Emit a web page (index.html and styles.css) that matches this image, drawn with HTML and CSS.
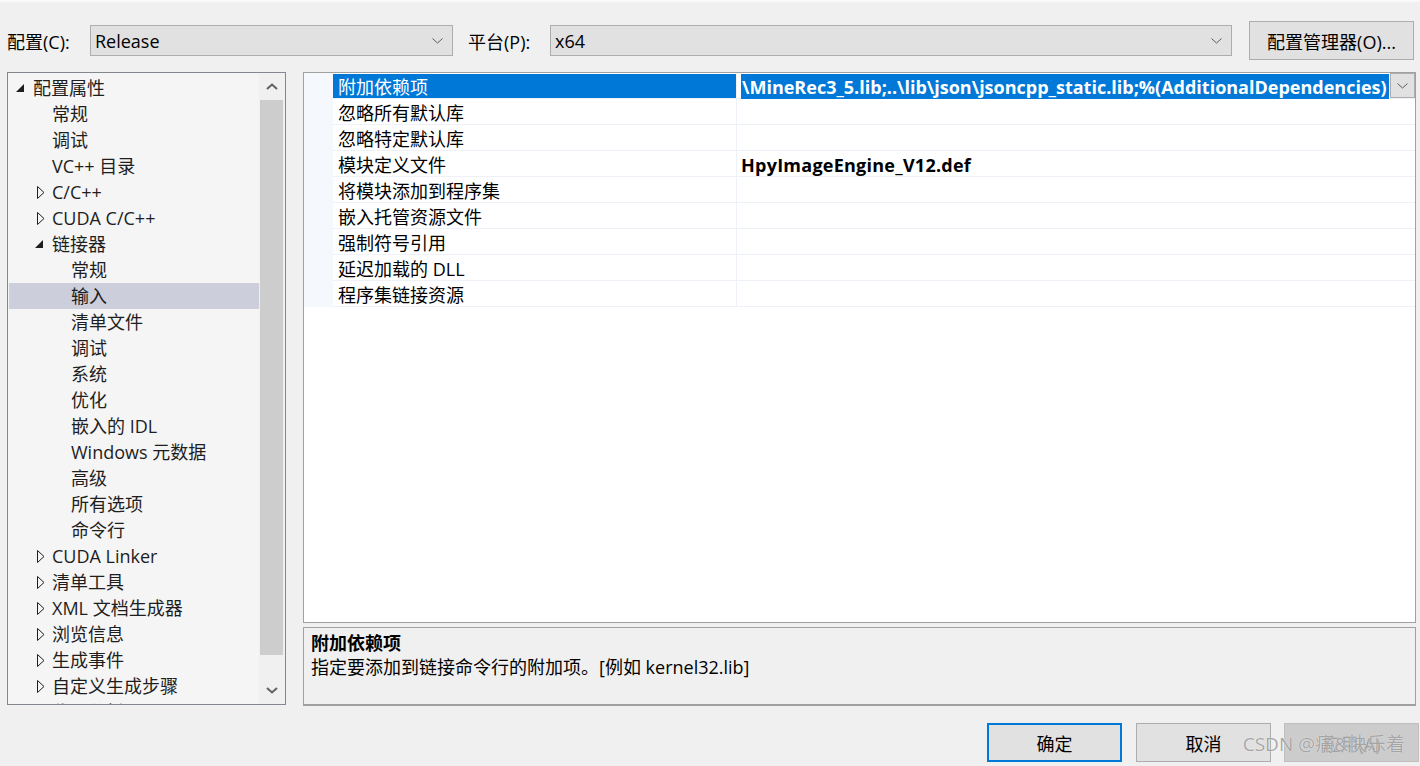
FILE: index.html
```html
<!DOCTYPE html>
<html lang="zh-CN">
<head>
    <meta charset="UTF-8">
    <title>属性页</title>
    <link rel="stylesheet" href="styles.css">
</head>

<body>
    <div class="dialog">
        <div class="toolbar">
            <span class="field-label">配置(C):</span>
            <div class="combo combo-config">
                <span>Release</span>
                <svg class="chev" width="11" height="6" viewBox="0 0 11 6"><polyline points="0.5,0.5 5.5,5 10.5,0.5" /></svg>
            </div>
            <span class="field-label label-platform">平台(P):</span>
            <div class="combo combo-platform">
                <span>x64</span>
                <svg class="chev" width="11" height="6" viewBox="0 0 11 6"><polyline points="0.5,0.5 5.5,5 10.5,0.5" /></svg>
            </div>
            <button class="btn btn-manager">配置管理器(O)...</button>
        </div>

        <div class="main">
            <div class="tree">
                <ul class="tree-list">
                    <li class="node lv0"><span class="twisty"><svg width="8" height="8" viewBox="0 0 8 8"><polygon points="8,0 8,8 0,8" fill="#1e1e1e" /></svg></span>配置属性</li>
                    <li class="node lv1"><span class="twisty"></span>常规</li>
                    <li class="node lv1"><span class="twisty"></span>调试</li>
                    <li class="node lv1"><span class="twisty"></span>VC++ 目录</li>
                    <li class="node lv1"><span class="twisty"><svg class="closed" width="8" height="13" viewBox="0 0 8 13"><polygon points="0.5,0.5 7,6.5 0.5,12.5" /></svg></span>C/C++</li>
                    <li class="node lv1"><span class="twisty"><svg class="closed" width="8" height="13" viewBox="0 0 8 13"><polygon points="0.5,0.5 7,6.5 0.5,12.5" /></svg></span>CUDA C/C++</li>
                    <li class="node lv1"><span class="twisty"><svg width="8" height="8" viewBox="0 0 8 8"><polygon points="8,0 8,8 0,8" fill="#1e1e1e" /></svg></span>链接器</li>
                    <li class="node lv2">常规</li>
                    <li class="node lv2 selected">输入</li>
                    <li class="node lv2">清单文件</li>
                    <li class="node lv2">调试</li>
                    <li class="node lv2">系统</li>
                    <li class="node lv2">优化</li>
                    <li class="node lv2">嵌入的 IDL</li>
                    <li class="node lv2">Windows 元数据</li>
                    <li class="node lv2">高级</li>
                    <li class="node lv2">所有选项</li>
                    <li class="node lv2">命令行</li>
                    <li class="node lv1"><span class="twisty"><svg class="closed" width="8" height="13" viewBox="0 0 8 13"><polygon points="0.5,0.5 7,6.5 0.5,12.5" /></svg></span>CUDA Linker</li>
                    <li class="node lv1"><span class="twisty"><svg class="closed" width="8" height="13" viewBox="0 0 8 13"><polygon points="0.5,0.5 7,6.5 0.5,12.5" /></svg></span>清单工具</li>
                    <li class="node lv1"><span class="twisty"><svg class="closed" width="8" height="13" viewBox="0 0 8 13"><polygon points="0.5,0.5 7,6.5 0.5,12.5" /></svg></span>XML 文档生成器</li>
                    <li class="node lv1"><span class="twisty"><svg class="closed" width="8" height="13" viewBox="0 0 8 13"><polygon points="0.5,0.5 7,6.5 0.5,12.5" /></svg></span>浏览信息</li>
                    <li class="node lv1"><span class="twisty"><svg class="closed" width="8" height="13" viewBox="0 0 8 13"><polygon points="0.5,0.5 7,6.5 0.5,12.5" /></svg></span>生成事件</li>
                    <li class="node lv1"><span class="twisty"><svg class="closed" width="8" height="13" viewBox="0 0 8 13"><polygon points="0.5,0.5 7,6.5 0.5,12.5" /></svg></span>自定义生成步骤</li>
                    <li class="node lv1"><span class="twisty"><svg class="closed" width="8" height="13" viewBox="0 0 8 13"><polygon points="0.5,0.5 7,6.5 0.5,12.5" /></svg></span>代码分析</li>
                </ul>
                <div class="scrollbar">
                    <div class="sb-btn">
                        <svg width="12" height="7" viewBox="0 0 12 7"><polyline points="1,6 6,1.5 11,6" /></svg>
                    </div>
                    <div class="sb-track"><div class="sb-thumb"></div></div>
                    <div class="sb-btn">
                        <svg width="12" height="7" viewBox="0 0 12 7"><polyline points="1,1 6,5.5 11,1" /></svg>
                    </div>
                </div>
            </div>

            <div class="right">
                <div class="grid">
                    <div class="grid-row selected">
                        <div class="gutter"></div>
                        <div class="cell name">附加依赖项</div>
                        <div class="cell value">
                            <span class="edit-text">\MineRec3_5.lib;..\lib\json\jsoncpp_static.lib;%(AdditionalDependencies)</span>
                            <span class="drop-btn">
                                <svg width="11" height="6" viewBox="0 0 11 6"><polyline points="0.5,0.5 5.5,5 10.5,0.5" /></svg>
                            </span>
                        </div>
                    </div>
                    <div class="grid-row"><div class="gutter"></div><div class="cell name">忽略所有默认库</div><div class="cell value"></div></div>
                    <div class="grid-row"><div class="gutter"></div><div class="cell name">忽略特定默认库</div><div class="cell value"></div></div>
                    <div class="grid-row"><div class="gutter"></div><div class="cell name">模块定义文件</div><div class="cell value bold">HpyImageEngine_V12.def</div></div>
                    <div class="grid-row"><div class="gutter"></div><div class="cell name">将模块添加到程序集</div><div class="cell value"></div></div>
                    <div class="grid-row"><div class="gutter"></div><div class="cell name">嵌入托管资源文件</div><div class="cell value"></div></div>
                    <div class="grid-row"><div class="gutter"></div><div class="cell name">强制符号引用</div><div class="cell value"></div></div>
                    <div class="grid-row"><div class="gutter"></div><div class="cell name">延迟加载的 DLL</div><div class="cell value"></div></div>
                    <div class="grid-row"><div class="gutter"></div><div class="cell name">程序集链接资源</div><div class="cell value"></div></div>
                </div>
                <div class="desc">
                    <div class="desc-title">附加依赖项</div>
                    <div class="desc-text">指定要添加到链接命令行的附加项。[例如 kernel32.lib]</div>
                </div>
            </div>
        </div>

        <div class="footer">
            <button class="btn btn-default">确定</button>
            <button class="btn">取消</button>
            <button class="btn btn-disabled">应用(A)</button>
        </div>

        <div class="watermark">CSDN @痛&amp;快乐着</div>
    </div>
</body>
</html>
```

FILE: styles.css
```css
body {
    margin: 0;
    background: #f0f0f0;
    font-family: "Open Sans", "Noto Sans CJK SC", sans-serif;
    font-size: 18px;
    color: #000;
}

.dialog {
    position: relative;
    height: 766px;
    border-top: 2px solid #f9f9f9;
    box-sizing: border-box;
    overflow: hidden;
}

/* top row */
.toolbar {
    display: flex;
    align-items: center;
    height: 39px;
    margin-top: 19px;
    padding-left: 7px;
}

.field-label {
    width: 83px;
    flex: none;
    white-space: nowrap;
}

.label-platform {
    width: 82px;
}

.combo {
    display: flex;
    align-items: center;
    justify-content: space-between;
    height: 31px;
    box-sizing: border-box;
    border: 1px solid #adadad;
    background: #e1e1e1;
    padding: 0 9px 0 4px;
    flex: none;
}

.combo-config {
    width: 363px;
    margin-right: 15px;
}

.combo-platform {
    width: 682px;
    margin-right: 17px;
}

.chev polyline,
.drop-btn polyline {
    fill: none;
    stroke: #5a5a5a;
    stroke-width: 1;
}

.btn {
    font-family: inherit;
    font-size: 18px;
    color: #000;
    background: #e1e1e1;
    border: 1px solid #adadad;
    height: 39px;
    width: 135px;
    padding: 0;
    flex: none;
}

.btn-manager {
    width: 165px;
}

/* main area */
.main {
    display: flex;
    gap: 17px;
    height: 634px;
    margin: 12px 0 0 7px;
}

.tree {
    display: flex;
    width: 279px;
    height: 633px;
    box-sizing: border-box;
    border: 1px solid #828790;
    background: #f5f5f5;
    flex: none;
}

.tree-list {
    list-style: none;
    margin: 0;
    padding: 2px 0 0 0;
    width: 251px;
    overflow: hidden;
}

.node {
    display: flex;
    align-items: center;
    height: 26px;
    line-height: 26px;
    white-space: nowrap;
    color: #1e1e1e;
}

.node.lv0 { padding-left: 6px; }
.node.lv1 { padding-left: 25px; }
.node.lv2 { padding-left: 63px; }

.node.selected {
    background: #cccedb;
    margin-left: 1px;
    padding-left: 62px;
}

.twisty {
    display: flex;
    align-items: center;
    width: 19px;
    height: 26px;
    flex: none;
    padding-left: 2px;
    box-sizing: border-box;
}

.twisty .closed {
    margin-left: 2px;
}

.twisty .closed polygon {
    fill: none;
    stroke: #1e1e1e;
    stroke-width: 1;
}

.scrollbar {
    display: flex;
    flex-direction: column;
    width: 26px;
    background: #f0f0f0;
}

.sb-btn {
    display: flex;
    align-items: center;
    justify-content: center;
    height: 27px;
}

.sb-btn polyline {
    fill: none;
    stroke: #606060;
    stroke-width: 2;
}

.sb-track {
    flex: 1;
}

.sb-thumb {
    height: 555px;
    margin: 0 2px 0 1px;
    background: #cdcdcd;
}

.right {
    display: flex;
    flex-direction: column;
    gap: 4px;
    width: 1113px;
}

/* property grid */
.grid {
    height: 551px;
    box-sizing: border-box;
    border: 1px solid #a0a0a0;
    background: #fff;
}

.grid-row {
    display: flex;
    height: 26px;
    line-height: 28px;
}

.gutter {
    width: 29px;
    background: #f5f8fc;
    flex: none;
}

.cell {
    height: 26px;
    box-sizing: border-box;
    border-bottom: 1px solid #eef2f8;
    white-space: nowrap;
}

.cell.name {
    width: 404px;
    padding-left: 5px;
    border-right: 1px solid #eef2f8;
    flex: none;
}

.cell.value {
    flex: 1;
    padding-left: 4px;
    display: flex;
    min-width: 0;
}

.cell.bold {
    font-weight: 700;
    letter-spacing: 0.25px;
}

.grid-row.selected .cell.name {
    background: #0078d7;
    color: #fff;
    border-top: 1px solid #fff;
    line-height: 26px;
}

.edit-text {
    flex: 1;
    min-width: 0;
    overflow: hidden;
    background: #0078d7;
    color: #fff;
    font-weight: 700;
    height: 25px;
    margin-top: 1px;
    line-height: 26px;
    padding-left: 1px;
}

.drop-btn {
    display: flex;
    align-items: center;
    justify-content: center;
    width: 25px;
    height: 25px;
    margin-left: 1px;
    box-sizing: border-box;
    border: 1px solid #adadad;
    background: #e1e1e1;
    flex: none;
}

/* description */
.desc {
    height: 79px;
    box-sizing: border-box;
    border: 1px solid #a0a0a0;
    border-bottom-width: 2px;
    background: #f0f0f0;
    padding: 3px 7px;
    line-height: 24px;
}

.desc-title {
    font-weight: 700;
}

/* bottom buttons */
.footer {
    display: flex;
    justify-content: flex-end;
    gap: 13px;
    margin-top: 17px;
    padding-right: 1px;
}

.btn-default {
    border: 2px solid #0078d7;
    margin-right: 1px;
}

.btn-disabled {
    background: #cccccc;
    border-color: #bfbfbf;
    color: #a0a0a0;
}

.watermark {
    position: absolute;
    right: 15px;
    bottom: 9px;
    font-size: 19px;
    color: rgba(150, 150, 150, 0.85);
    text-shadow: 0 0 1px #fff;
    white-space: nowrap;
}
```
